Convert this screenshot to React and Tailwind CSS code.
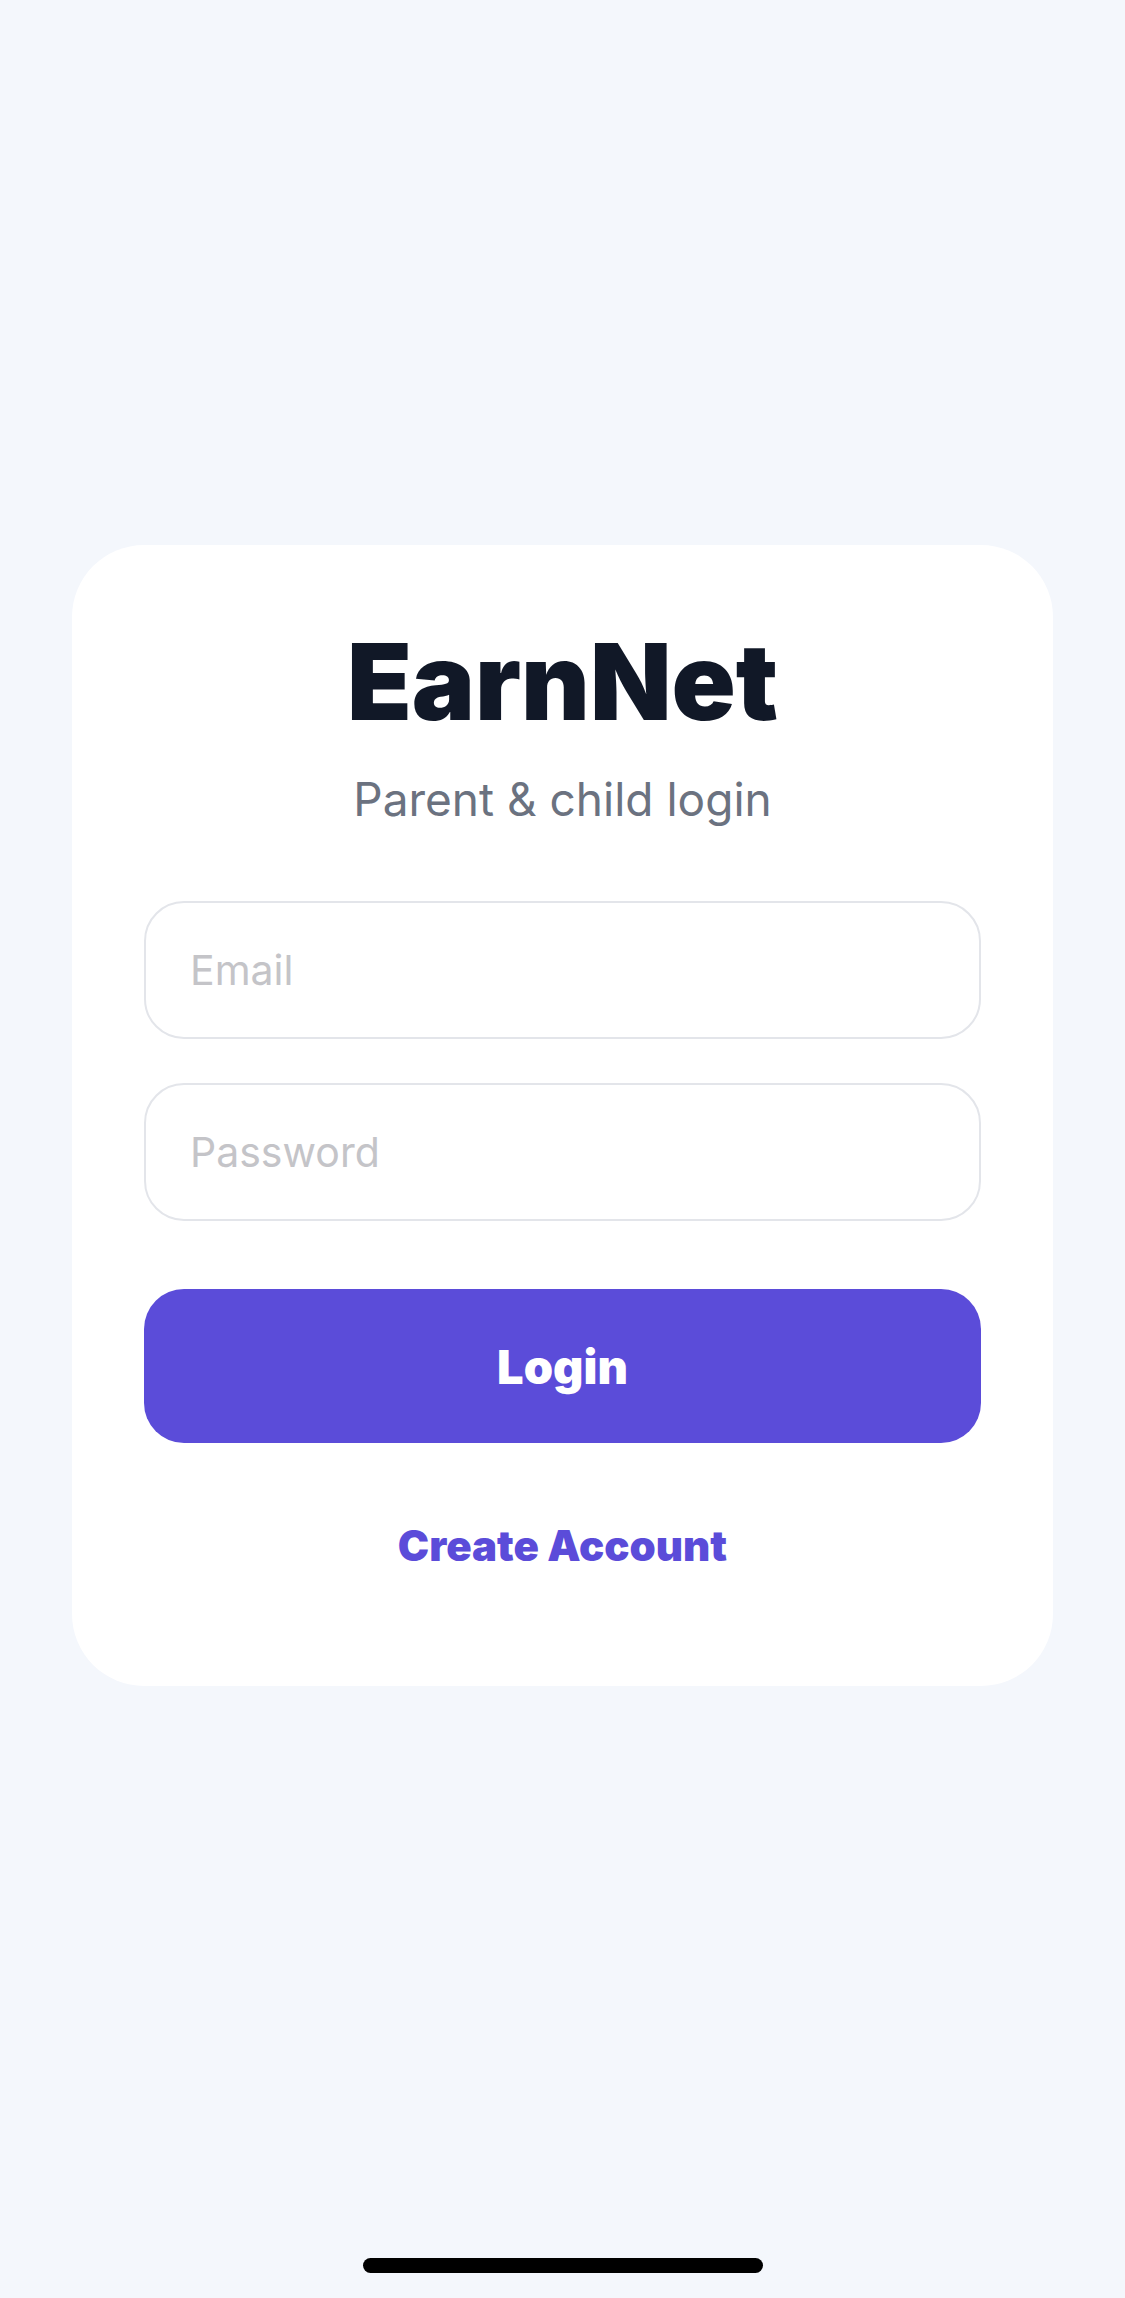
/**
 * EarnNet login screen.
 * Single card with title, email/password fields and actions.
 */

import { useState } from 'react'

/**
 * Rounded text field with a light border and grey placeholder.
 * @param {{ type: string, placeholder: string, value: string, onChange: (v: string) => void }} props
 */
function Field({ type, placeholder, value, onChange }) {
  return (
    <input
      type={type}
      placeholder={placeholder}
      value={value}
      onChange={(e) => onChange(e.target.value)}
      className="block h-[138px] w-full rounded-[40px] border-2 border-[#e3e5ea] bg-white px-[44px] text-[41px] text-[#111827] outline-none placeholder:text-[#c4c4c8]"
    />
  )
}

export default function App() {
  const [email, setEmail] = useState('')
  const [password, setPassword] = useState('')

  return (
    <div className="flex min-h-[2298px] flex-col bg-[#f4f7fc] px-[72px] pt-[545px] font-['Inter','Noto_Sans',sans-serif]">
      <section className="rounded-[72px] bg-white px-[72px] pt-[84px] pb-[119px]">
        <h1 className="text-center text-[106px] leading-none font-black text-[#111827]">
          EarnNet
        </h1>
        <p className="mt-[41px] text-center text-[46px] leading-none text-[#6b7280]">Parent &amp; child login</p>

        <div className="mt-[79px] flex flex-col gap-[44px]">
          <Field type="email" placeholder="Email" value={email} onChange={setEmail} />
          <Field type="password" placeholder="Password" value={password} onChange={setPassword} />
        </div>

        <button
          type="button"
          className="mt-[68px] flex h-[154px] w-full items-center justify-center rounded-[40px] bg-[#5b4cd9] text-[47px] leading-none font-black text-white"
        >
          Login
        </button>

        <button
          type="button"
          className="mx-auto mt-[82px] block text-[42px] leading-none font-black text-[#5b4cd9]"
        >
          Create Account
        </button>
      </section>

      <div className="mt-auto mb-[25px] h-[15px] w-[400px] self-center rounded-full bg-black" />
    </div>
  )
}
